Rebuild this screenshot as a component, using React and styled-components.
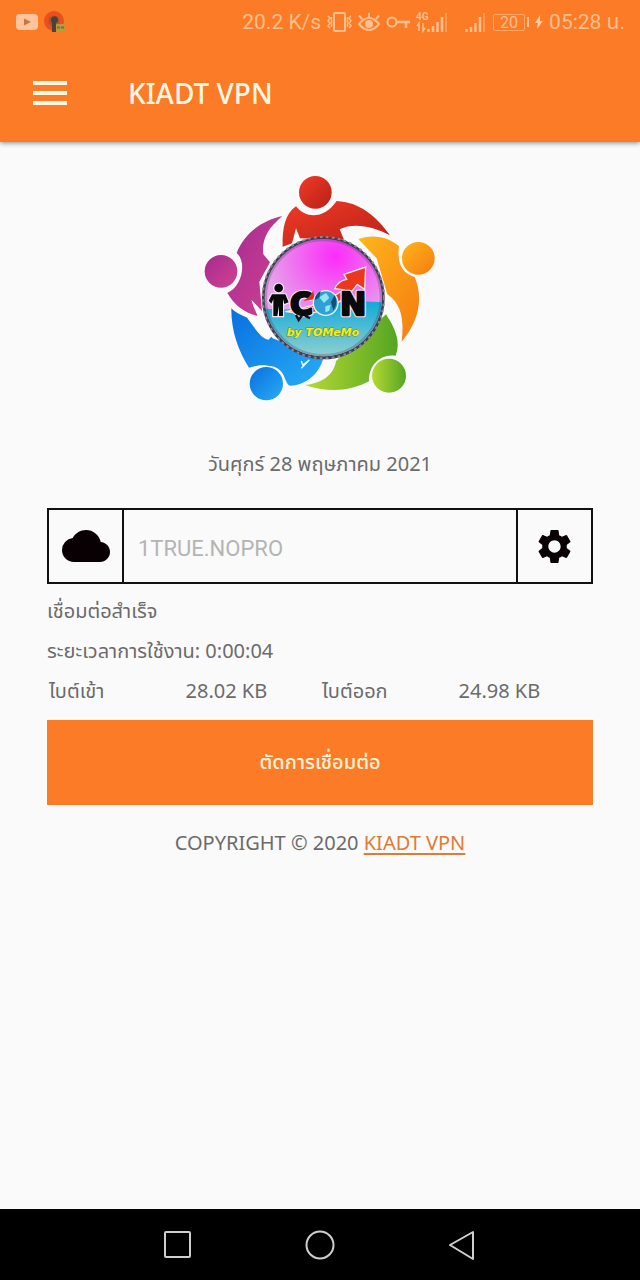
import React, { useState } from 'react';
import styled, { createGlobalStyle } from 'styled-components';
import { MdCloud, MdSettings } from 'react-icons/md';

const ORANGE = '#fc7b26';

const GlobalStyle = createGlobalStyle`
    * {
        box-sizing: border-box;
    }
    body {
        margin: 0;
        background: #fafafa;
        color: #6b6b6b;
        font-family: "Noto Sans", "Noto Sans Thai", sans-serif;
        font-size: 20px;
    }
    button, input {
        font: inherit;
    }
`

const Screen = styled.div`
    min-height: 100vh;
    display: flex;
    flex-direction: column;
`

const Header = styled.header`
    background: ${ORANGE};
    box-shadow: 0 1px 5px rgba(0, 0, 0, 0.45);
`

const StatusBar = styled.div`
    display: flex;
    justify-content: space-between;
    align-items: center;
    height: 44px;
    padding: 0 15px 0 16px;
    color: #ffbf8e;
    font-family: Roboto, "Noto Sans Thai", sans-serif;
    font-size: 21px;
    line-height: 40px;
`

const StatusGroup = styled.div`
    display: flex;
    align-items: center;
    gap: 6px;
    white-space: nowrap;
`

const Battery = styled.span`
    display: flex;
    align-items: center;
    gap: 2px;
    font-size: 16px;
    line-height: 15px;

    span {
        width: 32px;
        border: 1px solid #ffa866;
        border-radius: 2px;
        text-align: center;
    }
    &::after {
        content: '';
        width: 2px;
        height: 10px;
        background: #ffbf8e;
    }
`

const Toolbar = styled.div`
    display: flex;
    align-items: center;
    gap: 61px;
    height: 98px;
    padding: 0 33px;
`

const MenuButton = styled.button`
    display: flex;
    padding: 0;
    border: 0;
    background: none;
    color: #fff6df;
`

const Title = styled.h1`
    margin: 0;
    color: #fff6e4;
    font-size: 28px;
    font-weight: 500;
`

const Main = styled.main`
    flex: 1;
    display: flex;
    flex-direction: column;
    padding: 23px 47px;
`

const Logo = styled.svg`
    align-self: center;
    width: 260px;
    height: 245px;
`

const DateText = styled.p`
    margin: 38px 0 28px;
    line-height: 32px;
    text-align: center;
`

const ServerBox = styled.div`
    display: flex;
    height: 76px;
    border: 2px solid #111;
`

const IconButton = styled.button`
    flex: none;
    display: flex;
    align-items: center;
    justify-content: center;
    width: 73px;
    padding: 0;
    border: 0;
    background: none;
    color: #080002;
`

const ServerInput = styled.input`
    flex: 1;
    min-width: 0;
    padding: 4px 14px 0;
    border: solid #111;
    border-width: 0 2px;
    border-radius: 0;
    outline: 0;
    background: none;
    color: #b4b4b4;
    font-family: Roboto, sans-serif;
    font-size: 22px;
`

const StatusText = styled.p`
    margin: 0;
    line-height: 40px;
`

const Info = styled.div`
    padding: 7px 0 9px;
`

const Traffic = styled.dl`
    display: grid;
    grid-template-columns: repeat(4, 1fr);
    margin: 0;
    line-height: 40px;
    white-space: nowrap;

    dt, dd {
        margin: 0;
        padding-left: 2px;
    }
`

const ConnectButton = styled.button`
    height: 85px;
    border: 0;
    background: ${ORANGE};
    color: #fff3dc;
    font-weight: 500;
`

const Copyright = styled.p`
    margin: 22px 0;
    line-height: 32px;
    text-align: center;

    a {
        color: #e07b35;
        text-underline-offset: 3px;
    }
`

const NavBar = styled.nav`
    display: flex;
    justify-content: center;
    gap: 112px;
    height: 71px;
    background: #000;
`

const NavButton = styled.button`
    width: 30px;
    padding: 0;
    border: 0;
    background: none;

    svg {
        display: block;
        fill: none;
        stroke: #cfcfcf;
        stroke-width: 2;
        stroke-linejoin: round;
    }
`

function NotificationIcons() {
    return (
        <StatusGroup>
            <svg width="22" height="16" viewBox="0 0 22 16">
                <rect width="22" height="16" rx="4" fill="#ffc49b" />
                <path d="M8 4.500l7 3.500-7 3.500z" fill="#c9743c" />
            </svg>
            <svg width="22" height="22" viewBox="0 0 22 22">
                <circle cx="10" cy="10" r="10" fill="#e9501c" />
                <circle cx="10" cy="10" r="5.500" fill="#a9552e" />
                <path d="M7 9a3.500 3.500 0 1 1 5 3v9H8v-9a3.500 3.500 0 0 1-1-3z" fill="#4b423c" />
                <rect x="12" y="13" width="9" height="7" rx="1" fill="#b99b3b" />
                <path d="M13 16.500h7" stroke="#6f7730" strokeWidth="2" strokeDasharray="3 1" />
            </svg>
        </StatusGroup>
    );
}

function SystemIcons() {
    return (
        <StatusGroup>
            <span>20.2 K/s</span>
            <svg width="25" height="20" viewBox="0 0 25 20" fill="none" stroke="#ffbf8e" strokeWidth="2">
                <rect x="7" y="1" width="11" height="18" rx="1" />
                <path d="M1 4l2 2-2 3 2 2-2 3 2 2M4.500 5v10M24 4l-2 2 2 3-2 2 2 3-2 2M20.500 5v10" strokeWidth="1.500" />
            </svg>
            <svg width="22" height="20" viewBox="0 0 22 20" fill="none" stroke="#ffbf8e" strokeWidth="2">
                <path d="M1 12q10-12 20 0q-10 12-20 0zM11 5V1M4 7L1 3.500M18 7l3-3.500" />
                <circle cx="11" cy="12" r="3" fill="#ffbf8e" />
            </svg>
            <svg width="24" height="20" viewBox="0 0 24 20" fill="none" stroke="#ffbf8e" strokeWidth="2">
                <circle cx="6" cy="10" r="4.500" />
                <path d="M10.500 10H24M20 10v6" strokeWidth="2.500" />
            </svg>
            <svg width="31" height="22" viewBox="0 0 31 22" stroke="#ffbf8e" strokeWidth="2.500">
                <text x="0" y="9" fontSize="10" fontWeight="700" fill="#ffbf8e" stroke="none">4G</text>
                <path d="M3 20v-8l-2 3M7 12v8l2-3" fill="none" strokeWidth="1.500" />
                <path d="M12.500 21v-3M17 21v-6M21.500 21V11M26 21V6" />
                <path d="M30 21V2" stroke="#ff9d58" strokeWidth="2" />
            </svg>
            <svg width="34" height="22" viewBox="0 0 34 22" stroke="#ffbf8e" strokeWidth="2.500">
                <path d="M13.500 21v-3M18 21v-5M22.500 21V12M27 21V6" />
                <path d="M31 21V2" stroke="#ff9d58" strokeWidth="2" />
            </svg>
            <Battery><span>20</span></Battery>
            <svg width="8" height="14" viewBox="0 0 8 14" fill="#ffd0a8">
                <path d="M5 0L0 8h3l-1 6 6-8H5z" />
            </svg>
            <span>05:28 น.</span>
        </StatusGroup>
    );
}

function TeamLogo() {
    return (
        <Logo viewBox="0 0 780 735" role="img" aria-label="iCON">
            <defs>
                <linearGradient id="red" x2="1" y2="1"><stop stopColor="#f03b26" /><stop offset="1" stopColor="#b81f18" /></linearGradient>
                <linearGradient id="gold" x2="1" y2="1"><stop stopColor="#ffb51b" /><stop offset="1" stopColor="#f47c11" /></linearGradient>
                <linearGradient id="green" x2="1" y2="0"><stop stopColor="#b7d934" /><stop offset="1" stopColor="#54a522" /></linearGradient>
                <linearGradient id="blue" x2="1" y2="1"><stop stopColor="#086fe0" /><stop offset="1" stopColor="#28adf5" /></linearGradient>
                <linearGradient id="purple" x2="1" y2="1"><stop stopColor="#a52b91" /><stop offset="1" stopColor="#d14292" /></linearGradient>
                <radialGradient id="pink" cx="0.6" cy="0.15" r="0.6"><stop stopColor="#fb2cf9" /><stop offset="1" stopColor="#e6a6ea" /></radialGradient>
                <linearGradient id="sea" x2="0" y2="1"><stop stopColor="#12a9d8" /><stop offset="1" stopColor="#93d2cf" /></linearGradient>
                <clipPath id="ball"><circle cx="400" cy="398" r="176" /></clipPath>
            </defs>

            <path d="M278 245C276 190 286 145 318 124C350 164 405 160 440 108C508 112 557 151 600 211C548 184 492 172 449 193L462 224L330 220L318 190L306 235Z" fill="url(#red)" />
            <path d="M505 222C555 206 595 217 627 244C620 300 640 326 674 336C703 405 682 475 635 530C642 470 637 418 592 388L560 280Z" fill="url(#gold)" />
            <path d="M588 448C615 489 634 531 617 572C569 565 535 603 537 649C479 681 409 682 345 660C409 652 433 621 438 588Z" fill="url(#green)" />
            <path d="M124 430C152 458 200 463 218 485L248 520L400 580C386 633 340 662 302 662C280 660 293 605 234 602C210 598 194 604 177 608C144 557 123 495 124 430Z" fill="url(#blue)" />
            <path d="M277 153C235 189 214 222 220 268L240 292L208 350L216 438L184 404C190 423 197 440 204 453C167 446 134 422 112 384C157 365 171 290 140 264C164 204 215 167 277 153Z" fill="url(#purple)" />
            <path d="M185 405C193 447 226 469 250 508L236 524C210 519 195 488 172 460L203 453Z" fill="#fafafa" />
            <path d="M334 610L358 585L338 600L334 588" fill="none" stroke="#e6f7ff" strokeWidth="4" />

            <circle cx="376" cy="82" r="49" fill="url(#red)" />
            <circle cx="685" cy="280" r="49" fill="url(#gold)" />
            <circle cx="597" cy="632" r="51" fill="url(#green)" />
            <circle cx="229" cy="656" r="50" fill="url(#blue)" />
            <circle cx="93" cy="319" r="49" fill="url(#purple)" />

            <circle cx="400" cy="399" r="184" fill="#3c4150" />
            <circle cx="400" cy="398" r="182" fill="none" stroke="#8d8698" strokeWidth="6" strokeDasharray="8 10" />
            <g clipPath="url(#ball)">
                <rect x="220" y="220" width="360" height="360" fill="url(#pink)" />
                <path d="M220 430Q300 440 390 422T580 412V580H220Z" fill="url(#sea)" />
                <circle cx="400" cy="398" r="174" fill="none" stroke="#50406a" strokeOpacity="0.3" strokeWidth="10" />
            </g>
            <path d="M286 440Q400 420 460 374L434 371Q445 347 470 343L462 328L527 306L524 373L502 358Q450 430 350 447Z" fill="#e93720" stroke="#ffe9d8" strokeWidth="4" />
            <g fill="#080a0c" stroke="#f6e6f4" strokeWidth="7" paintOrder="stroke">
                <circle cx="266" cy="369" r="13" />
                <path d="M246 388H286L296 412L283 417L279 402V453H267V422L262 453H250V403L244 416L236 407Z" />
            </g>
            <g fontFamily="DejaVu Sans, sans-serif" fontSize="94" fontWeight="700" strokeLinejoin="round">
                <g fill="#f6e6f4" stroke="#f6e6f4" strokeWidth="14">
                    <text x="300" y="450">C</text>
                    <text x="450" y="450">N</text>
                </g>
                <g fill="#080a0c" stroke="#080a0c" strokeWidth="7">
                    <text x="300" y="450">C</text>
                    <text x="450" y="450">N</text>
                </g>
            </g>
            <path d="M318 450l8 15 10-14M345 452l15 8" fill="none" stroke="#111" strokeWidth="7" />
            <path d="M340 408l16-12 14-18 4 24z" fill="#d92c20" />
            <circle cx="407" cy="414" r="37" fill="#2f9fd4" stroke="#e2f5fb" strokeWidth="4" />
            <path d="M374 405q2-20 18-27l-4 20zM434 390q12 26-4 46l-7-25z" fill="#14506f" />
            <path d="M388 397l20-13 10 14-16 16zM406 424l16-5-4 18-12 5z" fill="#8ee7ef" />
            <text x="290" y="514" fill="#f7ee19" stroke="#648726" strokeWidth="3" paintOrder="stroke" fontFamily="DejaVu Sans, sans-serif" fontSize="33" fontWeight="700" fontStyle="italic">by TOMeMo</text>
        </Logo>
    );
}

function App() {
    const [server, setServer] = useState('1TRUE.NOPRO');

    return (
        <Screen>
            <GlobalStyle />
            <Header>
                <StatusBar>
                    <NotificationIcons />
                    <SystemIcons />
                </StatusBar>
                <Toolbar>
                    <MenuButton type="button" aria-label="เมนู">
                        <svg width="34" height="24" viewBox="0 0 34 24" stroke="currentColor" strokeWidth="4">
                            <path d="M0 2h34M0 12h34M0 22h34" />
                        </svg>
                    </MenuButton>
                    <Title>KIADT VPN</Title>
                </Toolbar>
            </Header>
            <Main>
                <TeamLogo />
                <DateText>วันศุกร์ 28 พฤษภาคม 2021</DateText>
                <ServerBox>
                    <IconButton type="button" aria-label="เซิร์ฟเวอร์"><MdCloud size={48} /></IconButton>
                    <ServerInput
                        type="text"
                        aria-label="เซิร์ฟเวอร์"
                        value={server}
                        onChange={(e) => setServer(e.target.value)}
                    />
                    <IconButton type="button" aria-label="ตั้งค่า"><MdSettings size={41} /></IconButton>
                </ServerBox>
                <Info>
                    <StatusText>เชื่อมต่อสำเร็จ</StatusText>
                    <StatusText>ระยะเวลาการใช้งาน: 0:00:04</StatusText>
                    <Traffic>
                        <dt>ไบต์เข้า</dt>
                        <dd>28.02 KB</dd>
                        <dt>ไบต์ออก</dt>
                        <dd>24.98 KB</dd>
                    </Traffic>
                </Info>
                <ConnectButton type="button">ตัดการเชื่อมต่อ</ConnectButton>
                <Copyright>COPYRIGHT © 2020 <a href="#kiadt">KIADT VPN</a></Copyright>
            </Main>
            <NavBar>
                <NavButton type="button" aria-label="Recent apps">
                    <svg width="30" height="30" viewBox="0 0 30 30"><rect x="2" y="2" width="25" height="25" rx="1" /></svg>
                </NavButton>
                <NavButton type="button" aria-label="Home">
                    <svg width="30" height="30" viewBox="0 0 30 30"><circle cx="15" cy="15" r="13.500" /></svg>
                </NavButton>
                <NavButton type="button" aria-label="Back">
                    <svg width="30" height="30" viewBox="0 0 30 30"><path d="M3 15L26 2v27z" /></svg>
                </NavButton>
            </NavBar>
        </Screen>
    );
}

export default App;
